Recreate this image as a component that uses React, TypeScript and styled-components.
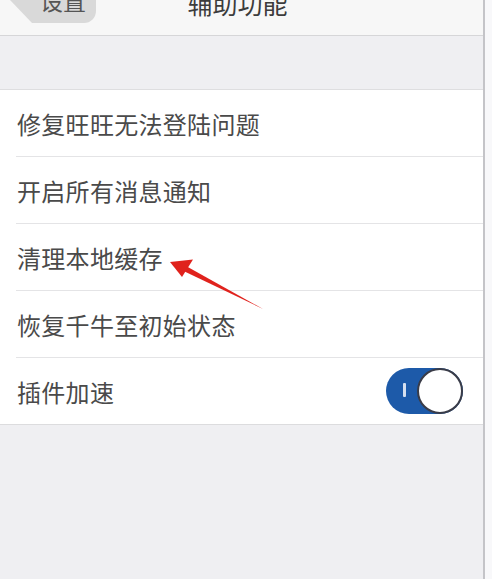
import React from 'react'
import styled, { createGlobalStyle } from 'styled-components'

const GlobalStyle = createGlobalStyle`
  html, body {
    margin: 0;
    padding: 0;
    background: #efeff2;
    font-family: "Noto Sans CJK SC", "Noto Sans", sans-serif;
  }
`

const items = ['修复旺旺无法登陆问题', '开启所有消息通知', '清理本地缓存', '恢复千牛至初始状态']

export default function App() {
  return (
    <>
      <GlobalStyle />
      <Screen>
        <Main>
          <Header>
            <BackButton>设置</BackButton>
            <Title>辅助功能</Title>
          </Header>
          <Spacer />
          <List>
            {items.map((label) => (
              <Row key={label}>
                <Label>{label}</Label>
              </Row>
            ))}
            <Row last>
              <Label>插件加速</Label>
              <Toggle>
                <OnMark />
                <Knob />
              </Toggle>
            </Row>
          </List>
        </Main>
        <Edge />
        <Pointer width="110" height="64" viewBox="0 0 110 64">
          <defs>
            <filter id="soft" x="-10%" y="-10%" width="120%" height="120%">
              <feGaussianBlur stdDeviation="0.6" />
            </filter>
          </defs>
          <g filter="url(#soft)" fill="#e0241f">
            <path d="M101 55 L24 12 L21.5 17 Z" />
            <path d="M8 8 L31 5.5 L20 23 Z" />
          </g>
        </Pointer>
      </Screen>
    </>
  )
}

interface RowProps {
  last?: boolean
}

const Screen = styled.div`
  position: relative;
  display: flex;
  width: 492px;
  height: 579px;
  overflow: hidden;
  background: #efeff2;
`
const Main = styled.div`
  width: 483px;
  display: flex;
  flex-direction: column;
`
const Edge = styled.div`
  flex: 1;
  border-left: 2px solid #c4c4c8;
  background: #f8f8fa;
`
const Header = styled.div`
  position: relative;
  height: 35px;
  display: flex;
  align-items: flex-start;
  justify-content: center;
  background: #f7f7f7;
  border-bottom: 1px solid #d6d6d8;
  overflow: hidden;
`
const BackButton = styled.div`
  position: absolute;
  left: 10px;
  top: -23px;
  width: 86px;
  height: 46px;
  box-sizing: border-box;
  padding-left: 30px;
  display: flex;
  align-items: center;
  background: #d9d9d9;
  border-radius: 0 12px 12px 0;
  clip-path: polygon(0 50%, 22px 100%, 100% 100%, 100% 0, 0 0);
  font-size: 23px;
  line-height: 46px;
  color: #555;
`
const Title = styled.div`
  margin-top: -20px;
  margin-right: 8px;
  font-size: 25px;
  line-height: 46px;
  color: #3c3c3c;
`
const Spacer = styled.div`
  height: 53px;
  border-bottom: 1px solid #dedee0;
`
const List = styled.div`
  background: #fff;
  border-bottom: 1px solid #dcdcde;
`
const Row = styled.div<RowProps>`
  height: 66px;
  margin-left: 16px;
  padding-right: 20px;
  display: flex;
  align-items: center;
  justify-content: space-between;
  border-bottom: ${({ last }) => (last ? 'none' : '1px solid #e4e4e6')};
`
const Label = styled.span`
  padding-left: 1px;
  font-size: 24px;
  color: #4a4a4a;
  letter-spacing: 0.3px;
`
const Toggle = styled.div`
  position: relative;
  width: 77px;
  height: 46px;
  box-sizing: border-box;
  border-radius: 23px;
  background: #1d5aa9;
  display: flex;
  align-items: center;
  justify-content: flex-end;
`
const OnMark = styled.span`
  position: absolute;
  left: 17px;
  top: 15px;
  width: 3px;
  height: 14px;
  border-radius: 1px;
  background: #d6e0ef;
`
const Knob = styled.span`
  width: 46px;
  height: 46px;
  box-sizing: border-box;
  border-radius: 50%;
  background: #fff;
  border: 2px solid #3a3c48;
`
const Pointer = styled.svg`
  position: absolute;
  left: 162px;
  top: 254px;
`
